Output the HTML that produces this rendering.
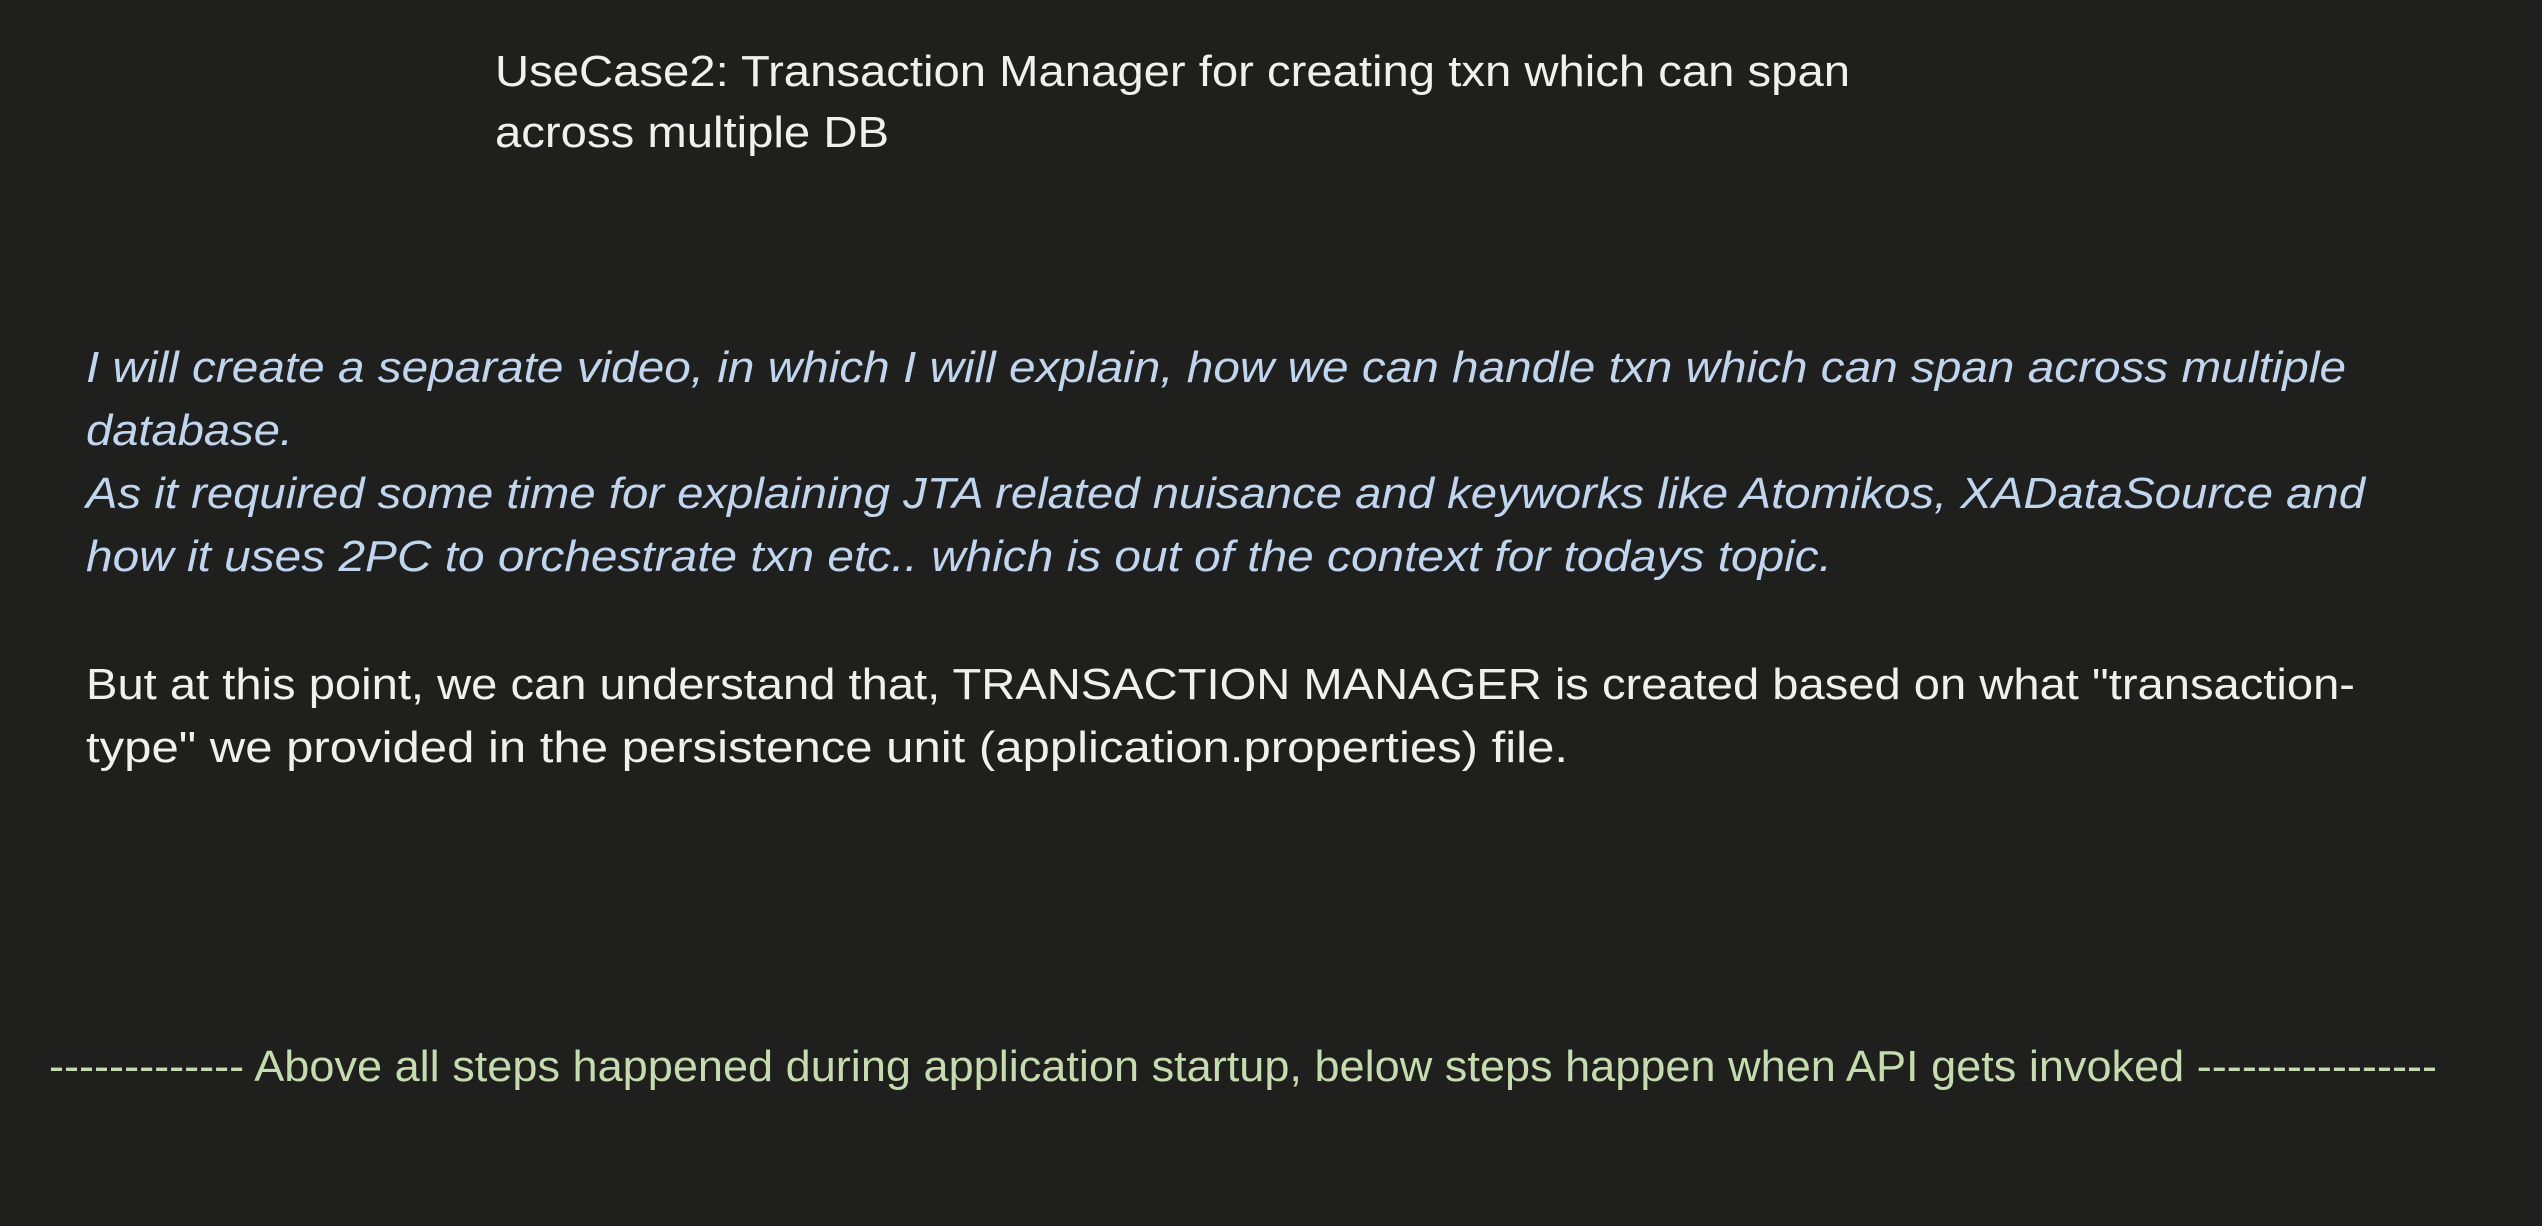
<!DOCTYPE html>
<html><head><meta charset="utf-8"><style>
html,body{margin:0;padding:0;background:#1f1f1e;width:2542px;height:1226px;overflow:hidden}
.l{position:absolute;font-family:"Liberation Sans",sans-serif;font-size:44px;line-height:44px;white-space:nowrap;transform-origin:0 0}
.w{color:#f0f0ee}.i{color:#c0d6ee;font-style:italic}.g{color:#c4dcae}
</style></head><body>
<div class="l w" style="left:495px;top:50px">UseCase2: Transaction Manager for creating txn which can span</div>
<div class="l w" style="left:495px;top:111px">across multiple DB</div>
<div class="l i" style="left:86px;top:346px">I will create a separate video, in which I will explain, how we can handle txn which can span across multiple</div>
<div class="l i" style="left:86px;top:409px">database.</div>
<div class="l i" style="left:86px;top:472px">As it required some time for explaining JTA related nuisance and keyworks like Atomikos, XADataSource and</div>
<div class="l i" style="left:86px;top:535px">how it uses 2PC to orchestrate txn etc.. which is out of the context for todays topic.</div>
<div class="l w" style="left:86px;top:663px">But at this point, we can understand that, TRANSACTION MANAGER is created based on what "transaction-</div>
<div class="l w" style="left:86px;top:726px">type" we provided in the persistence unit (application.properties) file.</div>
<div class="l g" style="left:49px;top:1045px">------------- Above all steps happened during application startup, below steps happen when API gets invoked ----------------</div>
<script>
var t=[1355,394,2260,207,2279,1746,2269,1482,2388];
var e=document.querySelectorAll('.l');
for(var k=0;k<e.length;k++){var w=e[k].getBoundingClientRect().width;e[k].style.transform='scaleX('+(t[k]/w)+')';}
</script>
</body></html>
